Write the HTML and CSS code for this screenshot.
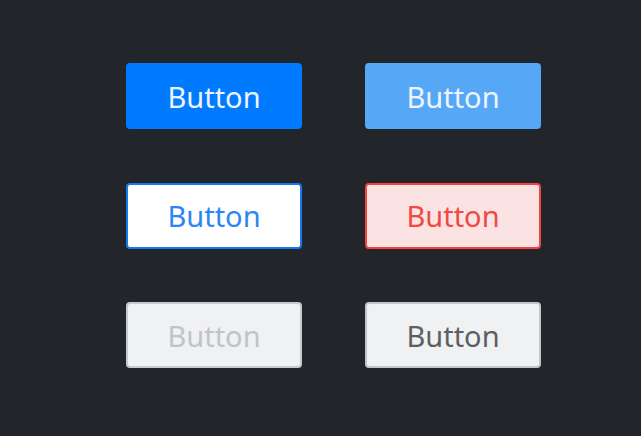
FILE: index.html
```html
<!DOCTYPE html>
<html>
<head>
<meta charset="utf-8">
<link rel="stylesheet" href="styles.css">
</head>
<body>
<div class="grid">
  <button class="btn btn-primary">Button</button>
  <button class="btn btn-primary-light">Button</button>
  <button class="btn btn-outline">Button</button>
  <button class="btn btn-danger">Button</button>
  <button class="btn btn-disabled" disabled>Button</button>
  <button class="btn btn-default">Button</button>
</div>
</body>
</html>
```
FILE: styles.css
```css
html, body {
  margin: 0;
  height: 100%;
  background: #222529;
}
.grid {
  display: grid;
  grid-template-columns: 176px 176px;
  grid-template-rows: 66px 66px 66px;
  column-gap: 63px;
  row-gap: 53.5px;
  padding: 63px 0 0 126px;
}
.btn {
  box-sizing: border-box;
  width: 176px;
  height: 66px;
  border-radius: 4px;
  border: 2px solid transparent;
  font-family: "Noto Sans", "Open Sans", sans-serif;
  font-size: 29px;
  padding: 0;
  display: flex;
  align-items: center;
  justify-content: center;
}
.btn-primary {
  background: #007bff;
  border-color: #007bff;
  color: #eef4ff;
}
.btn-primary-light {
  background: #56a8f7;
  border-color: #56a8f7;
  color: #eef4fd;
}
.btn-outline {
  background: #ffffff;
  border-color: #1579ef;
  color: #2a86f5;
}
.btn-danger {
  background: #fbe3e3;
  border-color: #ef4740;
  color: #f04a45;
}
.btn-disabled {
  background: #f0f1f3;
  border-color: #c8cacd;
  color: #c0c3c7;
}
.btn-default {
  background: #f0f1f3;
  border-color: #c3c5c9;
  color: #5c5f63;
}
```
